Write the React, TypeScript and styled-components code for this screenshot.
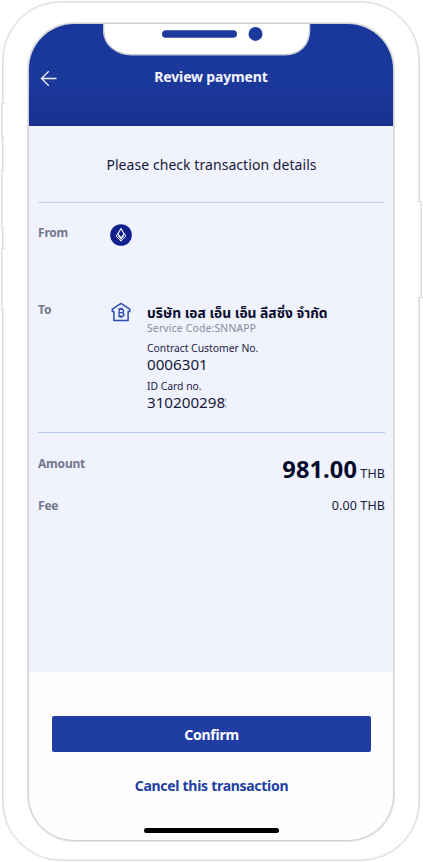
import React from "react";
import styled, { createGlobalStyle } from "styled-components";

const Global = createGlobalStyle`
  * { box-sizing: border-box; }
  html, body { margin: 0; padding: 0; background: #fff; overflow: hidden; }
  body { font-family: "Noto Sans", "Noto Sans Thai", "Open Sans", sans-serif; color: #161a38; }
`;

const Stage = styled.div`
  width: 423px;
  height: 862px;
  padding: 1px 0 0 2px;
  background: #fff;
`;

const Device = styled.div`
  position: relative;
  width: 418px;
  height: 860px;
  padding: 21px 25px;
  border: 1px solid #dcdcdc;
  border-radius: 59px;
  box-shadow: inset 0 0 0 1px #ececec;
`;

const SideKey = styled.i<{ $side: "left" | "right"; $top: number; $height: number }>`
  position: absolute;
  ${(p) => p.$side}: ${(p) => (p.$side === "left" ? -2 : -3)}px;
  top: ${(p) => p.$top}px;
  width: ${(p) => (p.$side === "left" ? 4 : 5)}px;
  height: ${(p) => p.$height}px;
  background: #fff;
  border: 1px solid #dedede;
  border-${(p) => (p.$side === "left" ? "right" : "left")}: 0;
  box-shadow: inset ${(p) => (p.$side === "left" ? "1px" : "-1px")} 0 0 #ededed;
`;

const Screen = styled.div`
  position: relative;
  display: flex;
  flex-direction: column;
  width: 366px;
  height: 818px;
  border: 1px solid #d2d2d4;
  border-radius: 46px;
  overflow: hidden;
  background: #fefefe;
  box-shadow: 0 0 0 1px #e4e4e4;
`;

const Notch = styled.svg`
  position: absolute;
  top: -1px;
  left: 74px;
`;

const Header = styled.header`
  flex: none;
  display: grid;
  grid-template-columns: 40px 1fr 40px;
  height: 102px;
  padding: 42px 0 0;
  background: linear-gradient(#19379a, #1b389b 55%, #173190);
`;

const Back = styled.svg`
  margin: 4px 0 0 11px;
`;

const Title = styled.h1`
  margin: 0;
  font-size: 14px;
  line-height: 22px;
  font-weight: 700;
  text-align: center;
  color: #f3f5ff;
  letter-spacing: -0.16px;
  white-space: nowrap;
`;

const Body = styled.main`
  flex: none;
  height: 546px;
  padding: 0 8px 0 9px;
  background: #f0f2fe;
`;

const Prompt = styled.p`
  height: 77px;
  margin: 0;
  padding-top: 28px;
  font-size: 14px;
  line-height: 22px;
  letter-spacing: 0.06px;
  text-align: center;
  border-bottom: 1px solid #c3d0f3;
`;

const Row = styled.section<{ $height: number; $top?: number }>`
  display: grid;
  grid-template-columns: 73px 36px 1fr;
  height: ${(p) => p.$height}px;
  padding-top: ${(p) => p.$top ?? 0}px;
`;

const Label = styled.span<{ $drop?: number }>`
  padding-top: ${(p) => p.$drop ?? 0}px;
  font-size: 12px;
  line-height: 18px;
  font-weight: 700;
  letter-spacing: -0.2px;
  color: #73778a;
`;

const Payee = styled.div`
  display: flex;
  flex-direction: column;
  white-space: nowrap;
`;

const PayeeName = styled.strong`
  font-size: 13.8px;
  line-height: 24px;
  height: 20px;
  color: #080c2c;
`;

const Small = styled.span<{ $muted?: boolean; $gap?: number }>`
  margin-top: ${(p) => p.$gap ?? 0}px;
  font-size: 10.4px;
  line-height: 14px;
  letter-spacing: ${(p) => (p.$muted ? 0.17 : -0.03)}px;
  color: ${(p) => (p.$muted ? "#888b9a" : "#20243f")};
`;

const AccountNumber = styled.span`
  display: flex;
  align-items: center;
  font-size: 15.2px;
  line-height: 18px;
`;

const DigitEdge = styled.svg`
  margin-top: 1px;
`;

const Totals = styled.section`
  padding-top: 21px;
  border-top: 1px solid #b7c6f0;
`;

const Total = styled.div<{ $height: number }>`
  display: flex;
  justify-content: space-between;
  align-items: flex-start;
  height: ${(p) => p.$height}px;
`;

const Money = styled.span<{ $drop?: number }>`
  padding-top: ${(p) => p.$drop ?? 0}px;
  font-size: 12.5px;
  line-height: 18px;
  letter-spacing: 0.1px;
  white-space: nowrap;
`;

const Big = styled.b`
  font-size: 23.6px;
  line-height: 30px;
  color: #050a2b;
`;

const Footer = styled.footer`
  display: flex;
  flex-direction: column;
  align-items: center;
  flex: 1;
  padding: 44px 0 0 1px;
`;

const Confirm = styled.button`
  width: 319px;
  height: 36px;
  margin: 0;
  padding: 1px 0 0;
  border: 0;
  border-radius: 2px;
  background: #1f3da3;
  color: #fff;
  font: 700 14px/35px "Noto Sans", sans-serif;
  letter-spacing: -0.25px;
`;

const Cancel = styled.button`
  margin: 23px 0 0;
  padding: 0;
  border: 0;
  background: none;
  color: #213fa4;
  font: 700 14px/22px "Noto Sans", sans-serif;
  letter-spacing: -0.29px;
  white-space: nowrap;
`;

const HomeBar = styled.div`
  width: 135px;
  height: 5px;
  margin-top: 31px;
  border-radius: 3px;
  background: #000;
`;

const LogoSlot = styled.div<{ $top: number; $left?: number }>`
  margin-top: ${(p) => p.$top}px;
  margin-left: ${(p) => p.$left ?? 0}px;
`;

const BankLogo = () => (
  <svg width="22" height="22" viewBox="0 0 22 22" fill="none">
    <circle cx="11" cy="11" r="10.8" fill="#10208b" />
    <path d="M11 4.6 7.9 9.8 11 14.2l3.100-4.400Z" stroke="#e9edff" strokeWidth="1.2" strokeLinejoin="round" />
    <path d="M7.900 9.200 6.200 12l4.800 5.200 4.800-5.200-1.700-2.800M8 11.800l3 3.200 3-3.200M11 14.400v2.800" stroke="#e9edff" strokeWidth="1" strokeLinejoin="round" />
  </svg>
);

const HouseBaht = () => (
  <svg width="20" height="20" viewBox="0 0 20 20" fill="none" stroke="#2b4bb0" strokeWidth="1.5">
    <path d="M2.9 9.6v8.9h14.2V9.6M3.4 9.6H1.3V7.1L10 1.3l8.7 5.8v2.5h-2.1" />
    <path d="M7.300 7.300h3.400c2.500 0 2.500 3.300 0 3.300H8m2.700 0c3 0 3 3.600 0 3.600H7.300m.8-6.900v6.900M9.200 5.800v1.500m1.700-1.500v1.500M9.200 14.200v1.500m1.700-1.500v1.500" strokeWidth="1.4" />
  </svg>
);

export default function App() {
  return (
    <Stage>
      <Global />
      <Device>
        <SideKey $side="left" $top={101} $height={35} />
        <SideKey $side="left" $top={168} $height={59} />
        <SideKey $side="left" $top={246} $height={62} />
        <SideKey $side="right" $top={199} $height={97} />
        <Screen>
          <Header>
            <Back width="17" height="17" viewBox="0 0 17 17" fill="none" stroke="#eef1ff" strokeWidth="1.3">
              <path d="M8.8 1.2 1.5 8.5l7.3 7.3M1.5 8.5h15" />
            </Back>
            <Title>Review payment</Title>
          </Header>
          <Body>
            <Prompt>Please check transaction details</Prompt>
            <Row $height={98} $top={21}>
              <Label>From</Label>
              <LogoSlot $top={0} $left={-1}><BankLogo /></LogoSlot>
            </Row>
            <Row $height={131}>
              <Label>To</Label>
              <LogoSlot $top={1}><HouseBaht /></LogoSlot>
              <Payee>
                <PayeeName lang="th">บริษัท เอส เอ็น เอ็น ลีสซิ่ง จำกัด</PayeeName>
                <Small $muted>Service Code:SNNAPP</Small>
                <Small $gap={6}>Contract Customer No.</Small>
                <AccountNumber>0006301</AccountNumber>
                <Small $gap={6}>ID Card no.</Small>
                <AccountNumber>
                  310200298
                  <DigitEdge width="2" height="11" viewBox="0 0 2 11" fill="#8b8fa5">
                    <path d="M.4 1.500h1v2h-1zM.4 8.500h1v2h-1z" />
                  </DigitEdge>
                </AccountNumber>
              </Payee>
            </Row>
            <Totals>
              <Total $height={42}>
                <Label $drop={1}>Amount</Label>
                <Money><Big>981.00</Big> THB</Money>
              </Total>
              <Total $height={30}>
                <Label $drop={1}>Fee</Label>
                <Money $drop={1}>0.00 THB</Money>
              </Total>
            </Totals>
          </Body>
          <Footer>
            <Confirm>Confirm</Confirm>
            <Cancel>Cancel this transaction</Cancel>
            <HomeBar />
          </Footer>
          <Notch width="210" height="34" viewBox="0 0 210 34">
            <path d="M.6-1h206v8c0 15-10 24.800-25 24.800H28.600C13.600 31.800.6 22 .6 7V-1Z" fill="#fff" stroke="#c6c8d6" strokeWidth="1.5" />
            <rect x="59" y="7.200" width="75" height="7.600" rx="3.800" fill="#1c399d" />
            <circle cx="152.500" cy="10.900" r="7" fill="#1c399d" />
          </Notch>
        </Screen>
      </Device>
    </Stage>
  );
}
